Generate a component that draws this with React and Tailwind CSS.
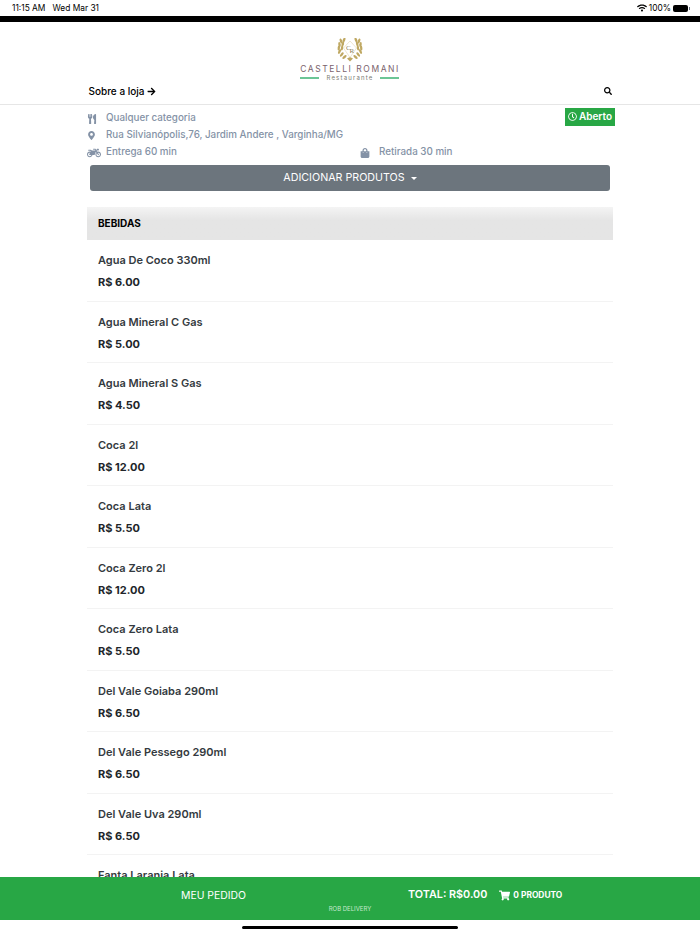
import React from 'react';
import { FaUtensils, FaMapMarkerAlt, FaMotorcycle, FaShoppingBag, FaShoppingCart, FaSearch, FaArrowRight, FaRegClock, FaWifi } from 'react-icons/fa';

const products = [
  { name: 'Agua De Coco 330ml', price: 'R$ 6.00' },
  { name: 'Agua Mineral C Gas', price: 'R$ 5.00' },
  { name: 'Agua Mineral S Gas', price: 'R$ 4.50' },
  { name: 'Coca 2l', price: 'R$ 12.00' },
  { name: 'Coca Lata', price: 'R$ 5.50' },
  { name: 'Coca Zero 2l', price: 'R$ 12.00' },
  { name: 'Coca Zero Lata', price: 'R$ 5.50' },
  { name: 'Del Vale Goiaba 290ml', price: 'R$ 6.50' },
  { name: 'Del Vale Pessego 290ml', price: 'R$ 6.50' },
  { name: 'Del Vale Uva 290ml', price: 'R$ 6.50' },
  { name: 'Fanta Laranja Lata', price: 'R$ 5.50' },
];

// leaves of the wreath, left side; the right side is mirrored
const leaves = [
  [4, 3, -20], [2.5, 6.5, -10], [1.8, 10, 5], [2.5, 13.5, 25], [4.8, 16.5, 40], [7.5, 19, 50],
  [7, 2, 20], [5.8, 6, 15], [5, 10, 10],
];

const StatusBar = () => (
  <div className="flex h-4 items-center justify-between pl-3 pr-[10px] text-[8.4px] leading-none text-black">
    <div className="flex gap-[7px]">
      <span>11:15 AM</span>
      <span>Wed Mar 31</span>
    </div>
    <div className="flex items-center gap-[2px]">
      <FaWifi className="text-[10px]" />
      <span>100%</span>
      <div className="h-[7px] w-[15px] rounded-[2px] bg-black" />
      <div className="-ml-[1px] h-[3px] w-[1px] bg-gray-500" />
    </div>
  </div>
);

const Logo = () => (
  <div className="flex flex-col items-center">
    <svg width="26" height="24" viewBox="0 0 26 24" fill="none">
      {leaves.map(([x, y, rot]) => (
        <g key={`${x}-${y}`}>
          <ellipse cx={x} cy={y} rx="1.2" ry="2.6" fill="#bfa862" transform={`rotate(${rot} ${x} ${y})`} />
          <ellipse cx={26 - x} cy={y} rx="1.2" ry="2.6" fill="#bfa862" transform={`rotate(${-rot} ${26 - x} ${y})`} />
        </g>
      ))}
      <path d="M13 23.5 L10 20.5 L13 19 L16 20.5 Z" fill="#bfa862" />
      <path d="M13 3 L6.5 10 L13 19.5 L19.5 10 Z" fill="#fff" stroke="#d8cc9f" strokeWidth="0.5" />
      <text x="9" y="11.5" fontSize="7" fontFamily="Liberation Serif, serif" fill="#8d7f5c">C</text>
      <text x="12.5" y="14.5" fontSize="7" fontFamily="Liberation Serif, serif" fill="#8d7f5c">R</text>
    </svg>
    <div className="mt-[3px] text-[8.5px] leading-[9px] tracking-[1.55px] text-[#7a626c]">CASTELLI ROMANI</div>
    <div className="-mt-[1px] flex w-[99px] items-center justify-between pt-[2px]">
      <div className="h-[2px] w-[19px] bg-[#6cc596]" />
      <span className="text-[6px] leading-[6px] tracking-[1.2px] text-[#7a7a72]">Restaurante</span>
      <div className="h-[2px] w-[19px] bg-[#6cc596]" />
    </div>
  </div>
);

const ProductRow = ({ name, price }) => (
  <div className="flex h-[61.5px] flex-col border-b border-[#f3f3f3] px-[11px] pt-[13px]">
    <div className="text-[11px] font-semibold leading-[15px] text-[#343a40]">{name}</div>
    <div className="mt-[7px] text-[11px] font-bold leading-[15px] text-[#212529]">{price}</div>
  </div>
);

const App = () => {
  return (
    <div className="h-[934px] overflow-hidden bg-white font-['Inter',sans-serif]">
      <StatusBar />
      <div className="h-[6px] bg-black" />
      <div className="flex h-[83px] flex-col border-b border-[#e6e6e6]">
        <div className="flex justify-center pt-[16px]">
          <Logo />
        </div>
        <div className="mx-auto mt-[3px] flex w-[525px] items-center justify-between pr-[1px]">
          <div className="flex items-center gap-[2px] pl-[1px] text-[10px] font-medium leading-[14px] text-black">
            Sobre a loja <FaArrowRight className="text-[9px]" />
          </div>
          <FaSearch className="text-[8px] text-black" />
        </div>
      </div>
      <div className="mx-auto w-[526px]">
        <div className="flex flex-col pt-[5px] text-[9.8px] font-medium text-[#8492a6]">
          <div className="flex h-[17px] items-center justify-between">
            <div className="flex items-center">
              <FaUtensils className="w-[19px] pr-[9px] text-[10px]" />
              <span>Qualquer categoria</span>
            </div>
            <div className="-mr-[2px] -mt-[4px] flex h-[18px] items-center gap-[2px] bg-[#28a745] px-[3px] text-[10px] font-semibold text-white">
              <FaRegClock className="text-[9px]" /> Aberto
            </div>
          </div>
          <div className="flex h-[17px] items-center">
            <FaMapMarkerAlt className="w-[19px] pr-[10px] text-[9px]" />
            <span>Rua Silvianópolis,76, Jardim Andere , Varginha/MG</span>
          </div>
          <div className="flex h-[17px] items-center">
            <div className="flex w-[273px] items-center">
              <FaMotorcycle className="w-[19px] pr-[5px] text-[12px]" />
              <span>Entrega 60 min</span>
            </div>
            <div className="flex items-center">
              <FaShoppingBag className="w-[19px] pr-[9px] text-[10px]" />
              <span>Retirada 30 min</span>
            </div>
          </div>
        </div>
        <div className="mx-[3px] mt-[4px] flex h-[26px] items-center justify-center gap-[6px] rounded-[3px] bg-[#6c757d] text-[10.7px] text-white">
          ADICIONAR PRODUTOS
          <div className="h-0 w-0 border-x-[3px] border-t-[3px] border-x-transparent border-t-white" />
        </div>
        <div className="mt-[16px] flex h-[33px] items-center bg-gradient-to-b from-[#f4f4f4] to-[#e5e5e5] to-40% px-[11px] text-[10px] font-bold text-black">
          BEBIDAS
        </div>
        <div>
          {products.map((product) => (
            <ProductRow key={product.name} name={product.name} price={product.price} />
          ))}
        </div>
      </div>
      <div className="fixed inset-x-0 bottom-[14px] h-[43px] bg-[#28a745] text-white">
        <div className="flex h-[37px] items-center">
          <div className="w-[408px] pl-[181px] text-[10.4px]">MEU PEDIDO</div>
          <div className="text-[10.8px] font-semibold">TOTAL: R$0.00</div>
          <div className="ml-[12px] flex items-center gap-[3px] text-[8.4px] font-bold">
            <FaShoppingCart className="text-[11px]" /> 0 PRODUTO
          </div>
        </div>
        <div className="-mt-[8px] text-center text-[6px] leading-[6px] text-[#c5e8cd]">ROB DELIVERY</div>
      </div>
      <div className="fixed bottom-[5px] left-[242px] h-[3px] w-[216px] rounded-full bg-black" />
    </div>
  );
};

export default App;
